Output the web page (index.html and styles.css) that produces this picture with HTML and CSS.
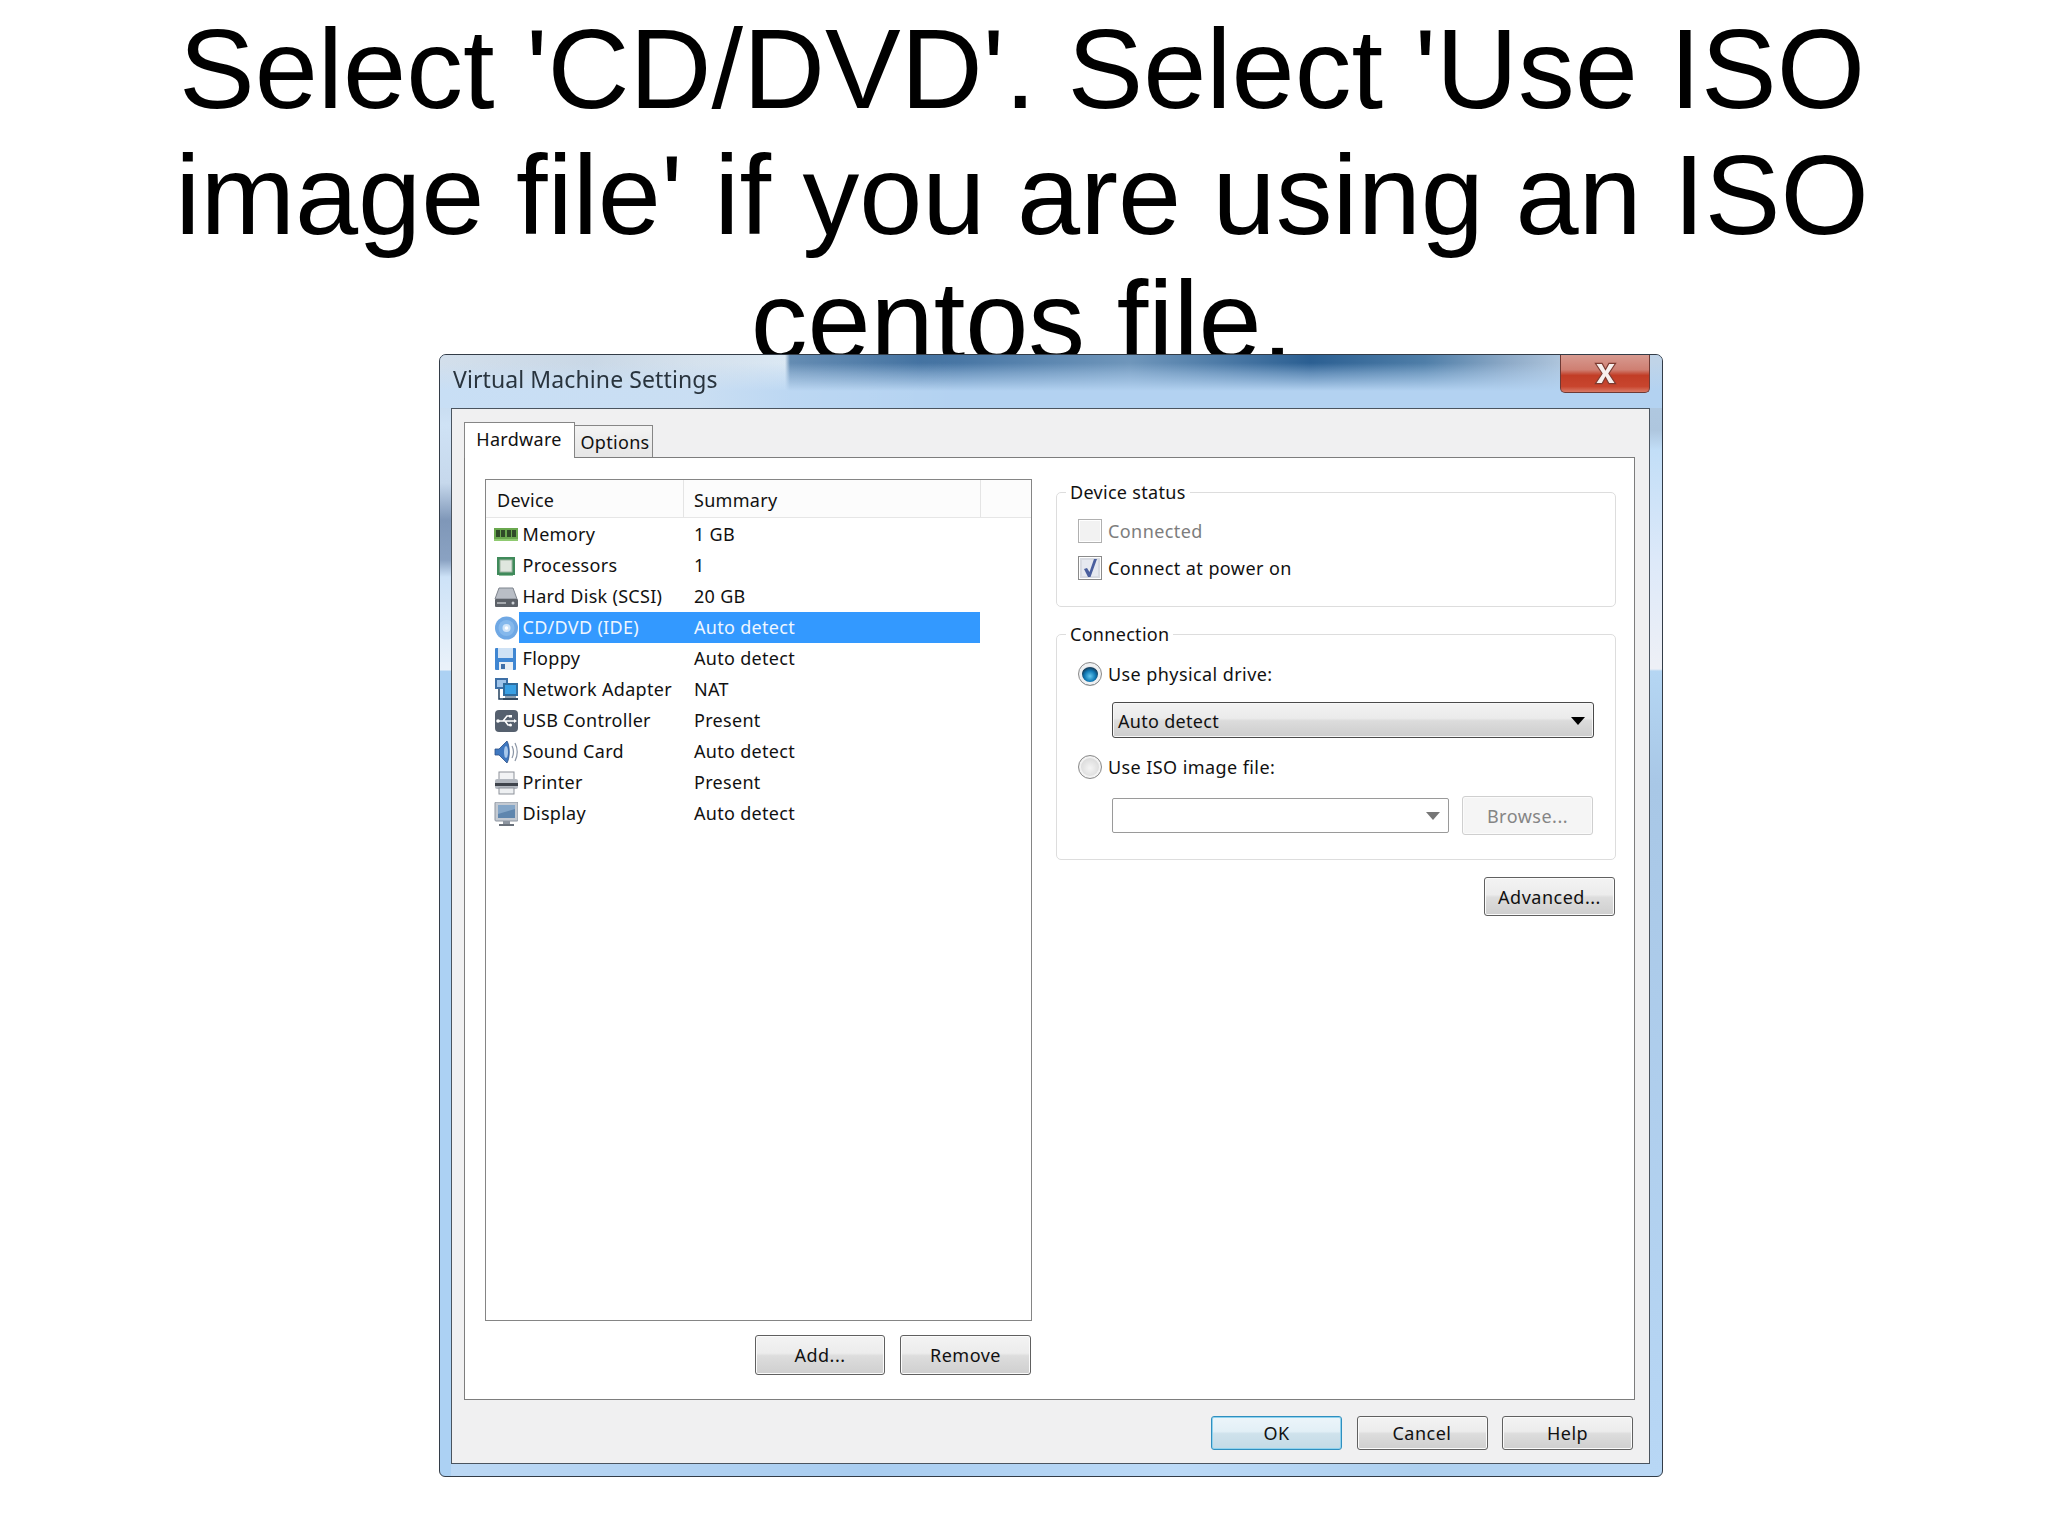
FILE: index.html
```html
<!DOCTYPE html>
<html lang="en">
<head>
<meta charset="utf-8">
<title>Select CD/DVD</title>
<link rel="stylesheet" href="styles.css">
</head>
<body>
<h1 class="headline">Select 'CD/DVD'. Select 'Use ISO<br>image file' if you are using an ISO<br>centos file.</h1>
<section class="window">
  <header class="titlebar">
    <span class="title-text">Virtual Machine Settings</span>
    <span class="close-btn"><svg viewBox="0 0 24 20" width="27" height="23"><path d="M3 1 L9 1 L12 6.500 L15 1 L21 1 L15 10 L21 19 L15 19 L12 13.500 L9 19 L3 19 L9 10 Z" fill="#f6f0ee" stroke="#7c3a30" stroke-width="1"/></svg></span>
  </header>
  <div class="client">
    <nav class="tabs">
      <span class="tab tab-active">Hardware</span>
      <span class="tab tab-idle">Options</span>
    </nav>
    <div class="panel">
      <div class="left-col">
        <div class="list">
          <div class="list-head">
            <span class="head-cell head-device">Device</span>
            <span class="head-cell head-summary">Summary</span>
          </div>
          <div class="list-body">
            <div class="row">
              <svg class="icon" viewBox="0 0 24 24"><rect x="0" y="5" width="24" height="13" fill="#6aa84f"/><rect x="0" y="16" width="24" height="2" fill="#8fca70"/><rect x="2" y="7" width="4" height="7" fill="#2f4a28"/><rect x="7" y="7" width="4" height="7" fill="#2f4a28"/><rect x="13" y="7" width="4" height="7" fill="#2f4a28"/><rect x="18" y="7" width="4" height="7" fill="#2f4a28"/></svg>
              <span class="cell-name">Memory</span><span class="cell-sum">1 GB</span>
            </div>
            <div class="row">
              <svg class="icon" viewBox="0 0 24 24"><rect x="3" y="3" width="18" height="18" fill="#3f8a5a"/><rect x="6" y="6" width="12" height="12" fill="#dfe6de" stroke="#9fb5a2"/><rect x="5" y="21" width="14" height="1" fill="#8fbf9c"/></svg>
              <span class="cell-name">Processors</span><span class="cell-sum">1</span>
            </div>
            <div class="row">
              <svg class="icon" viewBox="0 0 24 24"><path d="M5 3 H19 L23 14 H1 Z" fill="#b9bec6" stroke="#7f858e"/><rect x="1" y="14" width="23" height="8" rx="1" fill="#5c6168"/><rect x="3" y="17" width="9" height="2" fill="#a5a9ae"/><circle cx="19" cy="18" r="1.500" fill="#cfd3d8"/></svg>
              <span class="cell-name">Hard Disk (SCSI)</span><span class="cell-sum">20 GB</span>
            </div>
            <div class="row row-selected">
              <svg class="icon" viewBox="0 0 24 24"><circle cx="12.500" cy="12" r="11.500" fill="#6fa8e4"/><circle cx="12.500" cy="12" r="8" fill="#84b8ec"/><circle cx="12.500" cy="12" r="4" fill="#cfe4f8"/><circle cx="12.500" cy="12" r="1.800" fill="#fff"/></svg>
              <span class="cell-name">CD/DVD (IDE)</span><span class="cell-sum">Auto detect</span>
            </div>
            <div class="row">
              <svg class="icon" viewBox="0 0 24 24"><rect x="1" y="1" width="21" height="22" rx="1" fill="#3f86d2"/><rect x="4" y="1" width="15" height="10" fill="#cfe2f5"/><rect x="5" y="15" width="14" height="8" fill="#e8eef4"/><rect x="7" y="17" width="4" height="5" fill="#3f6fa8"/></svg>
              <span class="cell-name">Floppy</span><span class="cell-sum">Auto detect</span>
            </div>
            <div class="row">
              <svg class="icon" viewBox="0 0 24 24"><rect x="1" y="0" width="13" height="11" fill="#3d6fa6"/><rect x="3" y="2" width="9" height="7" fill="#9fc4ea"/><path d="M5 11 V21 H10" fill="none" stroke="#23405e" stroke-width="1.500"/><rect x="9" y="5" width="15" height="13" fill="#2f6c9e"/><rect x="11" y="7" width="11" height="9" fill="#39a0e4"/><rect x="11" y="18" width="11" height="2" fill="#8fa0b0"/><rect x="9" y="20" width="15" height="2" fill="#334a60"/></svg>
              <span class="cell-name">Network Adapter</span><span class="cell-sum">NAT</span>
            </div>
            <div class="row">
              <svg class="icon" viewBox="0 0 24 24"><rect x="1" y="1" width="23" height="22" rx="4" fill="#55606e"/><path d="M4 12 H20 M9 12 L13 7 H16 M11 12 L14 16 H16" fill="none" stroke="#fff" stroke-width="1.600"/><path d="M20 10 L23 12 L20 14 Z" fill="#fff"/><rect x="15" y="6" width="3" height="2.500" fill="#fff"/><circle cx="16.500" cy="16" r="1.500" fill="#fff"/><circle cx="4" cy="12" r="1.800" fill="#fff"/></svg>
              <span class="cell-name">USB Controller</span><span class="cell-sum">Present</span>
            </div>
            <div class="row">
              <svg class="icon" viewBox="0 0 24 24"><path d="M1 9 H5 L13 1 C16 6 16 18 13 23 L5 15 H1 Z" fill="#3f78c0" stroke="#2b4f86" stroke-width=".8"/><ellipse cx="12" cy="12" rx="2" ry="6" fill="#a8c8ec"/><path d="M18 6 C20 10 20 14 18 18 M21 3 C24 9 24 15 21 21" fill="none" stroke="#8a95a5" stroke-width="1.200"/></svg>
              <span class="cell-name">Sound Card</span><span class="cell-sum">Auto detect</span>
            </div>
            <div class="row">
              <svg class="icon" viewBox="0 0 24 24"><rect x="5" y="1" width="15" height="8" fill="#f2f3f5" stroke="#8d929a"/><rect x="1" y="8" width="23" height="10" rx="2" fill="#b3b8c0"/><rect x="1" y="12" width="23" height="3" fill="#3f444c"/><rect x="5" y="17" width="15" height="6" fill="#eef0f2" stroke="#8d929a"/></svg>
              <span class="cell-name">Printer</span><span class="cell-sum">Present</span>
            </div>
            <div class="row">
              <svg class="icon" viewBox="0 0 24 24"><rect x="1" y="0" width="23" height="19" rx="1" fill="#c4cad2" stroke="#8d95a0"/><rect x="4" y="3" width="17" height="13" fill="#5f86ae"/><path d="M4 3 H21 V7 L4 12 Z" fill="#84a6c8"/><rect x="9" y="19" width="7" height="3" fill="#8d95a0"/><rect x="5" y="22" width="15" height="2" fill="#6a717b"/></svg>
              <span class="cell-name">Display</span><span class="cell-sum">Auto detect</span>
            </div>
          </div>
        </div>
        <div class="list-actions">
          <span class="btn btn-add">Add...</span>
          <span class="btn btn-remove">Remove</span>
        </div>
      </div>
      <div class="right-col">
        <fieldset class="group group-status">
          <legend class="group-label">Device status</legend>
          <div class="option option-muted">
            <span class="check check-disabled"></span>
            <span>Connected</span>
          </div>
          <div class="option">
            <span class="check check-on"><svg viewBox="0 0 16 20" width="16" height="20"><path d="M2 11 L5 10 L7.500 14 L12 1 L15 1 L8.500 19 L6 19 Z" fill="#4a5f9e"/></svg></span>
            <span>Connect at power on</span>
          </div>
        </fieldset>
        <fieldset class="group group-conn">
          <legend class="group-label">Connection</legend>
          <div class="option">
            <span class="radio radio-on"></span>
            <span>Use physical drive:</span>
          </div>
          <div class="select-drive">
            <span>Auto detect</span>
            <span class="caret caret-dark"></span>
          </div>
          <div class="option option-iso">
            <span class="radio"></span>
            <span>Use ISO image file:</span>
          </div>
          <div class="iso-row">
            <div class="combo"><span class="caret caret-grey"></span></div>
            <span class="btn btn-disabled">Browse...</span>
          </div>
        </fieldset>
        <div class="advanced-row"><span class="btn btn-advanced">Advanced...</span></div>
      </div>
    </div>
    <footer class="footer">
      <span class="btn btn-foot btn-default">OK</span>
      <span class="btn btn-foot">Cancel</span>
      <span class="btn btn-foot">Help</span>
    </footer>
  </div>
</section>
</body>
</html>
```
FILE: styles.css
```css
* { box-sizing: border-box; }
html, body { margin: 0; padding: 0; background: #fff; }
body { width: 2048px; height: 1535px; overflow: hidden; }

.headline {
  height: 354px;
  margin: 0;
  padding: 6px 4px 0 0;
  overflow: hidden;
  text-align: center;
  font: 400 113.5px/126px "Liberation Sans", Arial, sans-serif;
  color: #000;
  white-space: nowrap;
}

.window {
  width: 1224px;
  height: 1123px;
  margin-left: 439px;
  padding: 0 12px 12px 11px;
  display: flex;
  flex-direction: column;
  border: 1px solid #333c47;
  border-radius: 7px 7px 6px 6px;
  font: 400 18px/24px "Noto Sans", sans-serif;
  letter-spacing: .3px;
  color: #111;
  filter: blur(.45px);
  background:
    linear-gradient(to bottom, #b8cfe6 0, #cfe2f5 70px, #c6d8ec 128px, #7f97b8 165px, #8aa2c2 205px, #cde2f7 222px, #eaf2fa 315px, #acd1f3 316px, #acd1f3 100%) left top / 11px 100% no-repeat,
    linear-gradient(to bottom, #b2cbe4 0, #aec6de 75px, #c2def7 95px, #dde9f9 205px, #eef0f6 314px, #b5d6f3 316px, #a8c7e6 430px, #b8d7f5 100%) right top / 12px 100% no-repeat,
    linear-gradient(to right, #bcd8f4 0, #a9cdf0 35%, #bcdaf7 60%, #aed0ef 80%, #bcd9f6 100%);
}

.titlebar {
  flex: none;
  height: 53px;
  margin: 0 -12px 0 -11px;
  padding: 0 12px 0 13px;
  display: flex;
  align-items: flex-start;
  justify-content: space-between;
  border-radius: 6px 6px 0 0;
  background:
    linear-gradient(to right, rgba(255, 255, 255, .28) 0, rgba(235, 240, 245, .4) 260px, rgba(255, 255, 255, .12) 350px, transparent 520px),
    linear-gradient(to bottom, rgba(179, 210, 241, 0) 0, rgba(179, 210, 241, 0) 8px, rgba(179, 210, 241, .4) 18px, #b3d2f1 36px),
    linear-gradient(to right, #c2d3e4 0, #b4c8dc 150px, #d6e5f2 345px, #4f7ca8 350px, #3f6f9f 480px, #6f96bb 690px, #2b5f92 870px, #4f7ea8 985px, #8fabc8 1070px, #c0d4e8 1150px);
}
.title-text {
  margin-top: 10px;
  font-size: 23px;
  line-height: 28px;
  letter-spacing: .1px;
  color: #29343e;
}
.close-btn {
  width: 90px;
  height: 38px;
  display: flex;
  align-items: center;
  justify-content: center;
  border: 1px solid #6e3a35;
  border-top: 0;
  border-radius: 0 0 5px 5px;
  background: linear-gradient(to bottom, #d79a90 0, #cf7f72 40%, #c23d26 55%, #c8452e 85%, #d97a66 100%);
}

.client {
  flex: 1;
  display: flex;
  flex-direction: column;
  min-height: 0;
  padding: 13px 14px 13px 12px;
  border: 1px solid #4a545f;
  background: #f0f0f1;
}

.tabs {
  flex: none;
  height: 35px;
  display: flex;
  align-items: flex-end;
}
.tab {
  display: flex;
  align-items: center;
  justify-content: center;
  border: 1px solid #868686;
  border-bottom: 0;
}
.tab-active {
  position: relative;
  z-index: 1;
  width: 111px;
  height: 36px;
  margin-bottom: -1px;
  padding: 0 1px 4px 0;
  background: #fff;
}
.tab-idle {
  width: 79px;
  height: 32px;
  margin-left: -1px;
  padding-left: 3px;
  background: linear-gradient(to bottom, #f3f3f3, #e6e6e6);
}

.panel {
  flex: 1;
  min-height: 0;
  display: flex;
  gap: 24px;
  padding: 21px 18px 24px 20px;
  border: 1px solid #7d7d7d;
  background: #fff;
}

.left-col {
  width: 547px;
  flex: none;
  display: flex;
  flex-direction: column;
}
.list {
  flex: 1;
  min-height: 0;
  border: 1px solid #858585;
  background: #fff;
}
.list-head {
  height: 38px;
  display: flex;
  border-bottom: 1px solid #e6e6e6;
  background: #fcfcfc;
}
.head-cell {
  display: flex;
  align-items: center;
  padding-top: 2px;
  border-right: 1px solid #e4e4e4;
}
.head-device { width: 198px; padding-left: 11px; }
.head-summary { width: 297px; padding-left: 10px; }
.list-body { padding-top: 1px; }
.row {
  display: grid;
  grid-template-columns: 25px 165px 296px;
  height: 31px;
  padding-left: 8px;
  align-items: center;
}
.icon {
  display: block;
  width: 24px;
  height: 24px;
}
.cell-name, .cell-sum {
  display: flex;
  align-items: center;
  height: 31px;
  padding-bottom: 2px;
  white-space: nowrap;
}
.cell-name { padding-left: 3.5px; }
.cell-sum { padding-left: 10px; }
.row-selected .cell-name,
.row-selected .cell-sum {
  padding-bottom: 1px;
  background: #3399ff;
  color: #eef6ff;
}

.list-actions {
  flex: none;
  display: flex;
  justify-content: flex-end;
  gap: 15px;
  margin-top: 14px;
  padding-right: 1px;
}

.btn {
  display: flex;
  align-items: center;
  justify-content: center;
  border: 1px solid #606060;
  border-radius: 3px;
  box-shadow: inset 0 0 0 1px #fbfbfb;
  background: linear-gradient(to bottom, #f3f3f3 0, #ececec 45%, #dddddd 52%, #cfcfcf 100%);
  letter-spacing: .5px;
  white-space: nowrap;
}
.btn-add { width: 130px; height: 40px; }
.btn-remove { width: 131px; height: 40px; }
.btn-advanced { width: 131px; height: 39px; }
.btn-disabled {
  width: 131px;
  height: 39px;
  border-color: #cfcfcf;
  background: #f5f5f5;
  color: #858585;
}
.btn-foot { width: 131px; height: 34px; padding-bottom: 1px; }
.btn-default {
  border-color: #2f8fbf;
  box-shadow: inset 0 0 0 1px #8fd2ee;
  background: linear-gradient(to bottom, #ecf5fa 0, #e2eff6 45%, #cfe2ec 52%, #c3dae6 100%);
}

.right-col {
  width: 560px;
  flex: none;
  padding-top: 1px;
}
.group {
  margin: 0;
  min-width: 0;
  border: 1px solid #dddddd;
  border-radius: 5px;
}
.group-label {
  margin-left: -12px;
  padding: 0 4px;
  line-height: 24px;
}
.group-status {
  padding: 15px 20px 26px 21px;
  display: flex;
  flex-direction: column;
  gap: 13px;
}
.group-conn {
  margin-top: 15px;
  padding: 16px 20px 24px 21px;
  display: flex;
  flex-direction: column;
  gap: 16px;
}
.option {
  display: flex;
  align-items: center;
  gap: 6px;
  height: 24px;
  letter-spacing: .42px;
  white-space: nowrap;
}
.option-muted { color: #7d7d7d; }
.option-iso { padding-top: 1px; }

.check {
  flex: none;
  width: 24px;
  height: 24px;
  display: flex;
  align-items: center;
  justify-content: center;
  border: 1px solid #8a8a8a;
  box-shadow: inset 0 0 0 1px #fff, inset 0 0 0 3px #d8dbe2;
  background: #e6e9f0;
}
.check-disabled {
  border-color: #b0b0b0;
  box-shadow: inset 0 0 0 1px #fff;
  background: #f2f2f2;
}
.radio {
  flex: none;
  width: 24px;
  height: 24px;
  border-radius: 50%;
  border: 1px solid #8a8a8a;
  box-shadow: inset 0 0 0 2px #f2f2f2;
  background: radial-gradient(circle at 50% 55%, #f4f4f4 0, #d4d4d4 80%);
}
.radio-on {
  box-shadow: inset 0 0 0 3px #eef0f2;
  background: radial-gradient(circle at 50% 60%, #66c8ee 0, #1079b5 32%, #14405f 50%, #e2e6ea 56%);
}

.select-drive {
  width: 482px;
  height: 36px;
  margin-left: 34px;
  padding: 1px 8px 0 5px;
  display: flex;
  align-items: center;
  justify-content: space-between;
  border: 1px solid #4a4a4a;
  border-radius: 3px;
  box-shadow: inset 0 0 0 1px #f7f7f7;
  background: linear-gradient(to bottom, #f2f2f2 0, #ebebeb 45%, #dcdcdc 52%, #cdcdcd 100%);
}
.iso-row {
  display: flex;
  align-items: center;
  gap: 13px;
  height: 39px;
  margin-top: 2px;
  margin-left: 34px;
}
.combo {
  width: 337px;
  height: 35px;
  padding-right: 8px;
  display: flex;
  align-items: center;
  justify-content: flex-end;
  border: 1px solid #9a9a9a;
  border-radius: 2px;
  background: #fff;
}
.caret {
  width: 0;
  height: 0;
  border-left: 7px solid transparent;
  border-right: 7px solid transparent;
  border-top: 8px solid #000;
}
.caret-grey { border-top-color: #777; }

.advanced-row {
  display: flex;
  justify-content: flex-end;
  margin-top: 17px;
  padding-right: 1px;
}

.footer {
  flex: none;
  display: flex;
  justify-content: flex-end;
  gap: 14.5px;
  margin-top: 16px;
  padding-right: 2px;
}
```
